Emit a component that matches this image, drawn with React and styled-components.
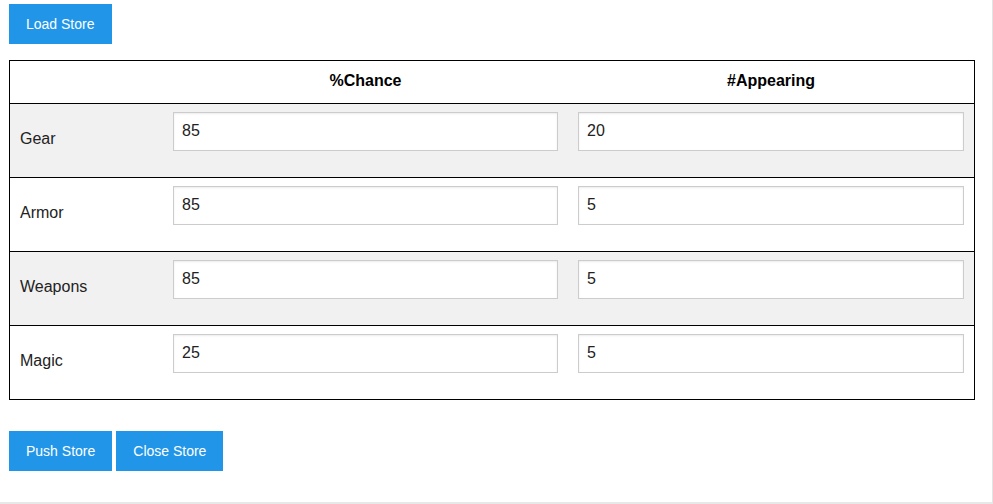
import React from "react";
import styled, { createGlobalStyle } from "styled-components";

const GlobalStyle = createGlobalStyle`
  html, body {
    margin: 0;
    padding: 0;
    background: #ffffff;
    font-family: "Liberation Sans", Arial, sans-serif;
  }
`;

const rows = [
  { name: "Gear", chance: "85", appearing: "20" },
  { name: "Armor", chance: "85", appearing: "5" },
  { name: "Weapons", chance: "85", appearing: "5" },
  { name: "Magic", chance: "25", appearing: "5" },
];

export default function App() {
  return (
    <>
      <GlobalStyle />
      <Page>
        <ButtonBar>
          <Button>Load Store</Button>
        </ButtonBar>
        <Table>
          <HeadRow>
            <HeadCell />
            <HeadCell>%Chance</HeadCell>
            <HeadCell>#Appearing</HeadCell>
          </HeadRow>
          {rows.map((r, i) => (
            <Row key={r.name} shaded={i % 2 === 0}>
              <Label>{r.name}</Label>
              <Cell>
                <Input defaultValue={r.chance} />
              </Cell>
              <Cell>
                <Input defaultValue={r.appearing} />
              </Cell>
            </Row>
          ))}
        </Table>
        <ButtonBar bottom>
          <Button>Push Store</Button>
          <Button>Close Store</Button>
        </ButtonBar>
      </Page>
    </>
  );
}

const Page = styled.div`
  box-sizing: border-box;
  width: 993px;
  height: 504px;
  padding: 4px 0 0 9px;
  border-right: 1px solid #e4e4e4;
  border-bottom: 2px solid #e8e8e8;
`;

const ButtonBar = styled.div`
  display: flex;
  gap: 4px;
  margin-top: ${(p) => (p.bottom ? "31px" : "0")};
`;

const Button = styled.button`
  height: 40px;
  padding: 0 17px;
  border: none;
  background: #2196e8;
  color: #ffffff;
  font-family: "Liberation Sans", Arial, sans-serif;
  font-size: 14px;
  cursor: pointer;
`;

const Table = styled.div`
  width: 966px;
  box-sizing: border-box;
  margin-top: 16px;
  border: 1px solid #000;
`;

const HeadRow = styled.div`
  display: grid;
  grid-template-columns: 153px 405px 406px;
  height: 42px;
`;

const HeadCell = styled.div`
  display: flex;
  align-items: center;
  justify-content: center;
  padding-bottom: 2px;
  font-weight: bold;
  font-size: 16px;
  color: #000;
`;

const Row = styled.div`
  display: grid;
  grid-template-columns: 153px 405px 406px;
  height: 73px;
  border-top: 1px solid #000;
  background: ${(p) => (p.shaded ? "#f1f1f1" : "#ffffff")};
`;

const Label = styled.div`
  display: flex;
  align-items: center;
  padding: 0 0 4px 10px;
  font-size: 16px;
  color: #222;
`;

const Cell = styled.div`
  padding: 8px 10px 0 10px;
`;

const Input = styled.input`
  box-sizing: border-box;
  display: block;
  width: 100%;
  height: 39px;
  padding: 0 8px 2px 8px;
  border: 1px solid #cccccc;
  box-shadow: inset 0 1px 2px rgba(0, 0, 0, 0.08);
  background: #ffffff;
  font-family: "Liberation Sans", Arial, sans-serif;
  font-size: 16px;
  color: #222;
  outline: none;
`;
